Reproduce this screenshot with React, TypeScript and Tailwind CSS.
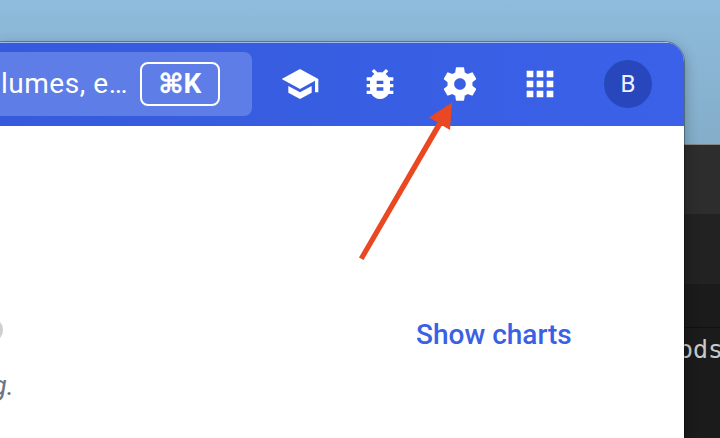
import { MdApps, MdBugReport, MdSchool } from "react-icons/md";

function GearIcon() {
  return (
    <svg width="40" height="40" viewBox="0 0 24 24" fill="currentColor">
      <path d="M19.43 12.98c.04-.32.07-.64.07-.98s-.03-.66-.07-.98l2.11-1.65c.19-.15.24-.42.12-.64l-2-3.46c-.12-.22-.39-.3-.61-.22l-2.49 1c-.52-.4-1.08-.73-1.69-.98l-.38-2.65C14.46 2.18 14.25 2 14 2h-4c-.25 0-.46.18-.49.42l-.38 2.65c-.61.25-1.17.59-1.69.98l-2.49-1c-.23-.09-.49 0-.61.22l-2 3.46c-.13.22-.07.49.12.64l2.11 1.65c-.04.32-.07.65-.07.98s.03.66.07.98l-2.11 1.65c-.19.15-.24.42-.12.64l2 3.46c.12.22.39.3.61.22l2.49-1c.52.4 1.08.73 1.69.98l.38 2.65c.03.24.24.42.49.42h4c.25 0 .46-.18.49-.42l.38-2.65c.61-.25 1.17-.59 1.69-.98l2.49 1c.23.09.49 0 .61-.22l2-3.46c.12-.22.07-.49-.12-.64l-2.11-1.65zM12 15.5c-1.93 0-3.5-1.57-3.5-3.5s1.57-3.5 3.5-3.5 3.5 1.57 3.5 3.5-1.57 3.5-3.5 3.5z" />
    </svg>
  );
}

function SearchBox() {
  return (
    <div className="flex h-16 w-[252px] shrink-0 items-center rounded-r-lg bg-[#5f7de6]">
      <span className="flex w-[140px] justify-end whitespace-nowrap pr-[12px] text-[28px] leading-8 tracking-[0.55px] text-white">
        lumes, e…
      </span>
      <kbd className="flex h-11 w-20 items-center justify-center rounded-lg border-2 border-white text-[28px] font-bold leading-8 text-white [font-family:Roboto,'DejaVu_Sans',sans-serif]">
        <span className="w-[25px] text-[27px] [-webkit-text-stroke:0.4px_white]">⌘</span>
        <span>K</span>
      </kbd>
    </div>
  );
}

function Toolbar() {
  return (
    <header className="flex h-[84px] items-center border-t border-[#a3b5ef] bg-gradient-to-r from-[#355adc] to-[#3a61e8] pb-px">
      <SearchBox />
      <nav className="ml-7 flex items-center gap-10 text-white">
        <MdSchool size={40} />
        <MdBugReport size={40} />
        <GearIcon />
        <MdApps size={40} />
      </nav>
      <div className="ml-11 flex size-12 items-center justify-center rounded-full bg-[#2947bd] text-2xl text-[#edf1ff]">
        B
      </div>
    </header>
  );
}

function Terminal() {
  return (
    <section className="absolute left-[640px] top-[144px] h-[294px] w-[80px] overflow-hidden border-t border-[#858585] bg-[#1b1b1b]">
      <div className="h-[69px] bg-[#2d2d2d]" />
      <div className="h-[70px] bg-[#222222]" />
      <div className="h-11 border-b border-[#111111] bg-[#1b1b1b]" />
      <pre className="pl-[38px] pt-[6px] text-[25px] leading-[32px] text-[#c9c9c9] [font-family:'DejaVu_Sans_Mono',monospace]">
        ods
      </pre>
    </section>
  );
}

function Arrow() {
  return (
    <svg className="absolute left-[350px] top-[95px]" width="110" height="170" viewBox="350 95 110 170" fill="#e94822">
      <path d="M452 102.5 L429 117.5 L437.3 122.3 L359 257.5 L363.5 260 L442 125.2 L450 130 Z" />
    </svg>
  );
}

export default function App() {
  return (
    <main className="relative h-[438px] w-[720px] overflow-hidden bg-gradient-to-b from-[#8fbbdc] to-[#83adc9] to-[33%] [font-family:Roboto,sans-serif]">
      <Terminal />
      <section className="absolute left-0 top-[42px] h-[396px] w-[684px] overflow-hidden rounded-tr-[20px] bg-white shadow-[0_0_0_1px_rgba(0,0,0,0.3),0_4px_14px_rgba(0,0,0,0.3)]">
        <Toolbar />
        <div className="flex h-[312px] flex-col">
          <div className="mt-[185px] flex h-12 items-center">
            <span className="-ml-[23px] -mt-[10px] size-[26px] shrink-0 rounded-full bg-[#cfcfcf]" />
            <button className="ml-[413px] whitespace-nowrap text-[28px] font-medium leading-8 text-[#3a61e4]">
              Show charts
            </button>
          </div>
          <p className="mt-[11px] flex w-[14px] justify-end whitespace-nowrap text-[28px] italic leading-8 text-[#6b7486]">
            g.
          </p>
        </div>
      </section>
      <Arrow />
    </main>
  );
}
